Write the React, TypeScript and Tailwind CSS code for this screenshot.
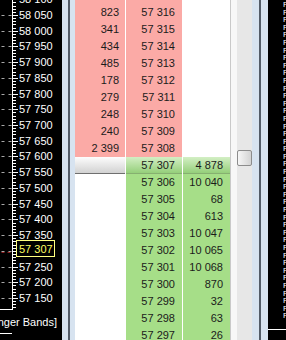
import React from "react";

const FONT = { fontFamily: '"Liberation Sans", Arial, sans-serif' };

const asks: [string, string][] = [
  ["823", "57 316"],
  ["341", "57 315"],
  ["434", "57 314"],
  ["485", "57 313"],
  ["178", "57 312"],
  ["279", "57 311"],
  ["248", "57 310"],
  ["240", "57 309"],
  ["2 399", "57 308"],
];

const bids: [string, string][] = [
  ["57 306", "10 040"],
  ["57 305", "68"],
  ["57 304", "613"],
  ["57 303", "10 047"],
  ["57 302", "10 065"],
  ["57 301", "10 068"],
  ["57 300", "870"],
  ["57 299", "32"],
  ["57 298", "63"],
  ["57 297", "26"],
];

function yOf(p: number) {
  return 15 + ((58050 - p) / 50) * 15.72;
}

function fmt(p: number) {
  const s = String(p);
  return s.slice(0, 2) + " " + s.slice(2);
}

function Chart() {
  const ticks: number[] = [];
  for (let p = 57120; p <= 58110; p += 10) ticks.push(p);
  const labels: number[] = [];
  for (let p = 57150; p <= 58100; p += 50) labels.push(p);
  return (
    <svg width="62" height="340" viewBox="0 0 62 340" className="block">
      <rect width="62" height="340" fill="#000" />
      {labels.map((p) => (
        <line
          key={"g" + p}
          x1="1.5"
          x2="12"
          y1={Math.round(yOf(p)) + 0.5}
          y2={Math.round(yOf(p)) + 0.5}
          stroke="#a8a8a8"
          strokeWidth="1"
          strokeDasharray="3 4"
        />
      ))}
      <line x1="1.5" x2="12" y1="252.5" y2="252.5" stroke="#8a1c1c" strokeWidth="1" strokeDasharray="3 3" />
      <line x1="12.5" x2="12.5" y1="0" y2="309" stroke="#fff" strokeWidth="1" />
      {ticks
        .filter((p) => yOf(p) < 308)
        .map((p) => {
          const y = Math.round(yOf(p)) + 0.5;
          const long = p % 50 === 0;
          return <line key={"t" + p} x1="13" x2={long ? 18 : 16} y1={y} y2={y} stroke="#fff" strokeWidth="1" />;
        })}
      <line x1="0" x2="13" y1="309.5" y2="309.5" stroke="#fff" strokeWidth="1" />
      {labels
        .filter((p) => p !== 57300)
        .map((p) => (
          <text
            key={"l" + p}
            x="19"
            y={yOf(p) + 4}
            fill="#fff"
            fontSize="11"
            style={FONT}
          >
            {fmt(p)}
          </text>
        ))}
      <rect x="16.5" y="240.5" width="38" height="16" fill="#000" stroke="#ffff80" strokeWidth="1" />
      <text x="19" y="252.5" fill="#ffff60" fontSize="11" style={FONT}>
        57 307
      </text>
      <text x="57" y="326" fill="#fff" fontSize="11" textAnchor="end" style={FONT}>
        [Bollinger Bands]
      </text>
      <line x1="0" x2="12" y1="333.5" y2="333.5" stroke="#fff" strokeWidth="1" />
    </svg>
  );
}

function Splitter({ left, right }: { left: string; right: string }) {
  return (
    <div className="flex h-full shrink-0">
      <div className={`${left} h-full bg-[#d7e3f0]`} />
      <div className="h-full w-[2px] bg-[#535c68]" />
      <div className={`${right} h-full bg-[#d7e3f0]`} />
    </div>
  );
}

function Row({
  a,
  b,
  c,
  aCls,
  bCls,
  cCls,
}: {
  a: string;
  b: string;
  c: string;
  aCls: string;
  bCls: string;
  cCls: string;
}) {
  return (
    <div className="flex h-[17px] shrink-0 bg-white text-[11px] leading-[17px] text-[#1b1b1b]">
      <div className={`w-[50px] pr-[6px] text-right ${aCls}`}>{a}</div>
      <div className={`ml-px w-[56px] pr-[7px] text-right ${bCls}`}>{b}</div>
      <div className={`ml-px w-[47px] pr-[7px] text-right ${cCls}`}>{c}</div>
    </div>
  );
}

function Table() {
  return (
    <div className="flex h-full w-[156px] shrink-0 bg-white" style={FONT}>
      <div className="flex w-[155px] flex-col overflow-hidden">
        <div className="flex h-[4px] shrink-0 bg-white">
          <div className="w-[50px] bg-[#fbaaa6]" />
          <div className="ml-px w-[56px] bg-[#fbaaa6]" />
          <div className="ml-px w-[47px] bg-white" />
        </div>
        {asks.map(([v, p]) => (
          <Row key={p} a={v} b={p} c="" aCls="bg-[#fbaaa6]" bCls="bg-[#fbaaa6]" cCls="bg-white" />
        ))}
        <div className="flex h-[17px] shrink-0 bg-white text-[11px] leading-[16px] text-[#1b1b1b]">
          <div className="w-[50px] border-b border-[#6f6f6f] bg-gradient-to-b from-[#fdfdfd] to-[#d2d2d2]" />
          <div className="ml-px w-[56px] border-b border-[#86b070] bg-gradient-to-b from-[#d3efc4] to-[#95cf7a] pr-[7px] text-right">
            57 307
          </div>
          <div className="ml-px w-[47px] border-b border-[#86b070] bg-gradient-to-b from-[#d3efc4] to-[#95cf7a] pr-[7px] text-right">
            4 878
          </div>
        </div>
        {bids.map(([p, v]) => (
          <Row key={p} a="" b={p} c={v} aCls="bg-white" bCls="bg-[#a6de88]" cCls="bg-[#a6de88]" />
        ))}
      </div>
      <div className="h-full w-px bg-[#c9c9c9]" />
    </div>
  );
}

function Scrollbar() {
  return (
    <div className="flex h-full w-[21px] shrink-0">
      <div className="h-full w-[6px] bg-[#f7f7f7]" />
      <div className="flex h-full w-[15px] flex-col bg-[#e7e7e7] pt-[150px]">
        <div className="h-[16px] w-[15px] rounded-[2px] border border-[#8c8c8c] bg-gradient-to-r from-[#f6f6f6] to-[#d3d3d3]" />
      </div>
    </div>
  );
}

function RightPanel() {
  const lines = Array.from({ length: 42 }, (_, i) => (i % 2 === 0 ? "P" : "P"));
  return (
    <div className="flex h-full w-[18px] shrink-0 flex-col bg-black" style={FONT}>
      <div className="h-[329px] overflow-hidden pl-[15px] pt-[1px]">
        {lines.map((l, i) => (
          <div key={i} className="h-[7.6px] text-[8px] leading-[7.6px] text-white">
            {l}
          </div>
        ))}
      </div>
      <div className="h-px bg-white" />
      <div className="flex-1" />
    </div>
  );
}

export default function App() {
  return (
    <div className="flex h-[340px] w-[286px] overflow-hidden bg-black">
      <div className="h-full w-[62px] shrink-0">
        <Chart />
      </div>
      <Splitter left="w-[6px]" right="w-[5px]" />
      <Table />
      <Scrollbar />
      <Splitter left="w-[7px]" right="w-[7px]" />
      <RightPanel />
    </div>
  );
}
